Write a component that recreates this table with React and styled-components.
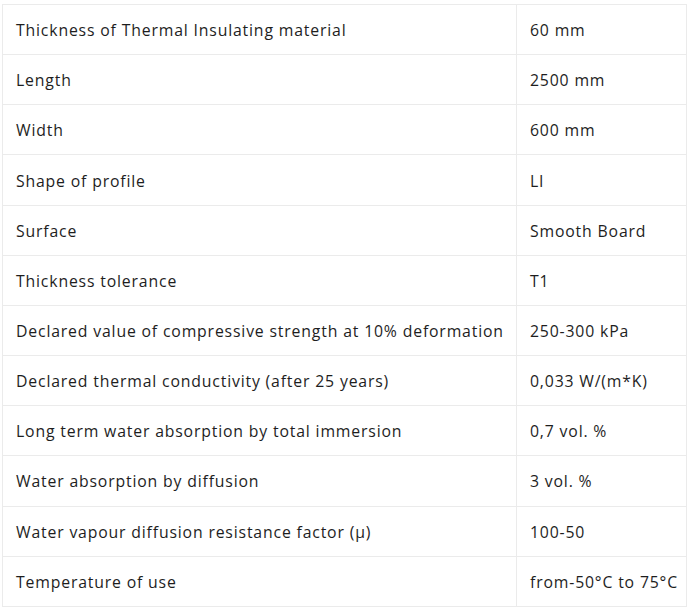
import React from 'react';
import styled, { createGlobalStyle } from 'styled-components';

const GlobalStyle = createGlobalStyle`
  html, body {
    margin: 0;
    padding: 0;
    background: #fff;
  }
  body {
    font-family: 'Open Sans', sans-serif;
  }
`;

const specs = [
  ['Thickness of Thermal Insulating material', '60 mm'],
  ['Length', '2500 mm'],
  ['Width', '600 mm'],
  ['Shape of profile', 'LI'],
  ['Surface', 'Smooth Board'],
  ['Thickness tolerance', 'T1'],
  ['Declared value of compressive strength at 10% deformation', '250-300 kPa'],
  ['Declared thermal conductivity (after 25 years)', '0,033 W/(m*K)'],
  ['Long term water absorption by total immersion', '0,7 vol. %'],
  ['Water absorption by diffusion', '3 vol. %'],
  ['Water vapour diffusion resistance factor (μ)', '100-50'],
  ['Temperature of use', 'from-50°C to 75°C'],
];

function App() {
  return (
    <React.Fragment>
      <GlobalStyle />
      <Wrapper>
        <SpecTable>
          <tbody>
            {specs.map(([name, value], index) => (
              <Row key={index}>
                <NameCell>{name}</NameCell>
                <ValueCell>{value}</ValueCell>
              </Row>
            ))}
          </tbody>
        </SpecTable>
      </Wrapper>
    </React.Fragment>
  );
}

export default App;

const Wrapper = styled.div`
  padding: 4px 3px 0 2px;
`;

const SpecTable = styled.table`
  width: 685px;
  border-collapse: collapse;
  table-layout: fixed;
  color: #1e1e1e;
  font-size: 15.8px;
  letter-spacing: 0.83px;
`;

const Row = styled.tr`
  height: 50.17px;
`;

const NameCell = styled.td`
  width: 500px;
  padding: 1px 0 0 13px;
  border: 1px solid #ebebeb;
  white-space: nowrap;
`;

const ValueCell = styled.td`
  padding: 1px 0 0 13px;
  border: 1px solid #ebebeb;
  white-space: nowrap;
`;
